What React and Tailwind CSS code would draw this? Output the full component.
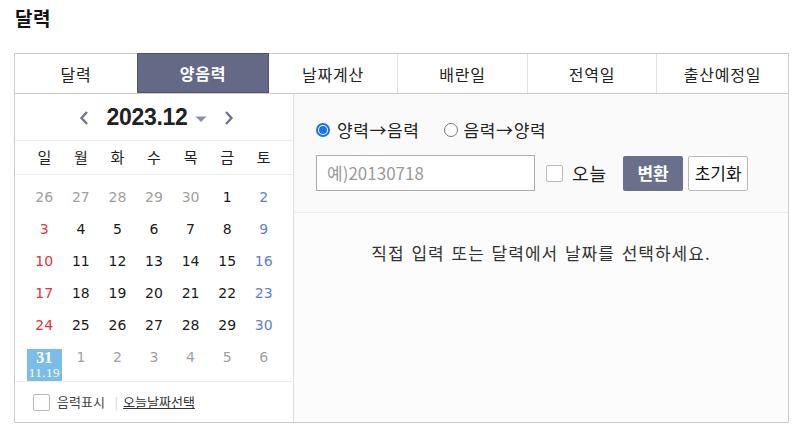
import React from "react";

const KR = { fontFamily: '"Noto Sans CJK KR", sans-serif' };
const NUM = { fontFamily: 'Tahoma, "DejaVu Sans", "Liberation Sans", sans-serif' };

const tabs = [
  { label: "달력", w: "w-[122px]" },
  { label: "양음력", w: "w-[132px]", active: true },
  { label: "날짜계산", w: "w-[129px]" },
  { label: "배란일", w: "w-[130px]" },
  { label: "전역일", w: "w-[129px]" },
  { label: "출산예정일", w: "w-[131px]" },
];

const weeks = [
  [[26, "o"], [27, "o"], [28, "o"], [29, "o"], [30, "o"], [1, "n"], [2, "sat"]],
  [[3, "sun"], [4, "n"], [5, "n"], [6, "n"], [7, "n"], [8, "n"], [9, "sat"]],
  [[10, "sun"], [11, "n"], [12, "n"], [13, "n"], [14, "n"], [15, "n"], [16, "sat"]],
  [[17, "sun"], [18, "n"], [19, "n"], [20, "n"], [21, "n"], [22, "n"], [23, "sat"]],
  [[24, "sun"], [25, "n"], [26, "n"], [27, "n"], [28, "n"], [29, "n"], [30, "sat"]],
  [[31, "today"], [1, "o"], [2, "o"], [3, "o"], [4, "o"], [5, "o"], [6, "o"]],
];

const colorFor = (t) =>
  t === "o"
    ? "text-[#a0a0a0]"
    : t === "sun"
    ? "text-[#e2323c]"
    : t === "sat"
    ? "text-[#5b7fd6]"
    : "text-[#1a1a1a]";

function Chevron({ dir }) {
  return (
    <svg width="10" height="16" viewBox="0 0 10 16" className="block">
      {dir === "left" ? (
        <path d="M8 2 L2.5 8 L8 14" fill="none" stroke="#6f7790" strokeWidth="2.4" />
      ) : (
        <path d="M2 2 L7.5 8 L2 14" fill="none" stroke="#6f7790" strokeWidth="2.4" />
      )}
    </svg>
  );
}

export default function App() {
  return (
    <div className="w-[795px] h-[428px] bg-white text-[#222] overflow-hidden" style={KR}>
      <div className="h-[53px] pl-[15px] pt-[5px] text-[19px] font-bold leading-[26px] text-[#111] tracking-[0.5px]">
        달력
      </div>
      <div className="ml-[14px] w-[775px] border border-[#cccccc]">
        {/* tabs */}
        <div className="flex h-[40px] border-b border-[#cccccc]">
          {tabs.map((t, i) => (
            <div
              key={i}
              className={
                t.w +
                " flex items-center justify-center text-[16px] tracking-[0.8px] " +
                (t.active
                  ? "bg-[#646a86] text-white font-bold border border-[#4e546e] -mt-px h-[40px]"
                  : "text-[#222] " + (i < tabs.length - 1 && !tabs[i + 1].active ? "border-r border-[#e2e2e2]" : ""))
              }
            >
              {t.label}
            </div>
          ))}
        </div>
        {/* body */}
        <div className="flex h-[328px]">
          {/* left calendar */}
          <div className="w-[279px] border-r border-[#dddddd] bg-white flex flex-col">
            <div className="h-[47px] border-b border-[#eeeeee] flex items-center justify-center">
              <div className="flex items-center mt-[1px] ml-[5px]">
                <Chevron dir="left" />
                <span
                  className="ml-[17px] text-[23px] font-bold text-[#222] tracking-[-0.3px]"
                  style={{ fontFamily: '"Liberation Sans", Arial, sans-serif' }}
                >
                  2023.12
                </span>
                <svg width="12" height="8" viewBox="0 0 12 8" className="ml-[7px] mt-[2px]">
                  <path d="M0.5 1.5 L11.5 1.5 L6 7 Z" fill="#8a90a6" />
                </svg>
                <span className="ml-[17px]">
                  <Chevron dir="right" />
                </span>
              </div>
            </div>
            <div className="h-[34px] border-b border-[#eeeeee] grid grid-cols-7 px-[11px] items-center text-[15px] text-[#222]">
              {["일", "월", "화", "수", "목", "금", "토"].map((d) => (
                <div key={d} className="text-center">
                  {d}
                </div>
              ))}
            </div>
            <div className="pt-[14px] px-[11px] h-[207px] border-b border-[#eeeeee]">
              {weeks.map((w, wi) => (
                <div key={wi} className="grid grid-cols-7 h-[32px]">
                  {w.map(([n, t], di) =>
                    t === "today" ? (
                      <div key={di} className="flex justify-center">
                        <div
                          className="w-[35px] h-[32px] bg-[#7cbce8] text-white flex flex-col items-center"
                          style={{ fontFamily: '"Liberation Serif", serif' }}
                        >
                          <span className="text-[16px] font-bold leading-[16px] mt-[1px]">31</span>
                          <span className="text-[13px] leading-[14px] tracking-[0.5px]">11.19</span>
                        </div>
                      </div>
                    ) : (
                      <div
                        key={di}
                        className={"text-center text-[14px] leading-[16px] " + colorFor(t)}
                        style={NUM}
                      >
                        {n}
                      </div>
                    )
                  )}
                </div>
              ))}
            </div>
            <div className="flex-1 flex items-center pl-[18px] text-[13px] text-[#444]">
              <span className="w-[17px] h-[17px] border border-[#bbbbbb] rounded-[2px] bg-white" />
              <span className="ml-[7px]">음력표시</span>
              <span className="ml-[10px] text-[#d5d5d5] text-[12px]">|</span>
              <span className="ml-[5px] underline text-[#333]">오늘날짜선택</span>
            </div>
          </div>
          {/* right */}
          <div className="flex-1 flex flex-col bg-[#fcfcfc]">
            <div className="h-[119px] bg-[#fafafa] border-b border-[#ececec] pl-[22px] pt-[26px]">
              <div className="flex items-center h-[20px] text-[17px] tracking-[0.6px] text-[#222]">
                <span className="w-[14px] h-[14px] rounded-full border-[2px] border-[#1a73e8] flex items-center justify-center bg-white">
                  <span className="w-[8px] h-[8px] rounded-full bg-[#1a73e8]" />
                </span>
                <span className="ml-[7px]">양력→음력</span>
                <span className="ml-[24px] w-[14px] h-[14px] rounded-full border border-[#777777] bg-white" />
                <span className="ml-[6px]">음력→양력</span>
              </div>
              <div className="flex items-center mt-[15px] h-[36px]">
                <div className="w-[219px] h-[36px] border border-[#aaaaaa] bg-white flex items-center pl-[10px] text-[17px] text-[#9a9a9a]">
                  예)20130718
                </div>
                <span className="ml-[11px] w-[17px] h-[17px] border border-[#bbbbbb] rounded-[2px] bg-white" />
                <span className="ml-[9px] text-[18px] tracking-[1px] text-[#222]">오늘</span>
                <div className="ml-[16px] w-[60px] h-[35px] rounded-[2px] bg-[#6b708a] text-white font-bold text-[17px] flex items-center justify-center">
                  변환
                </div>
                <div className="ml-[5px] w-[60px] h-[35px] rounded-[2px] border border-[#bbbbbb] bg-white text-[#111] text-[17px] flex items-center justify-center">
                  초기화
                </div>
              </div>
            </div>
            <div className="pt-[30px] text-center text-[17px] leading-[20px] text-[#333] tracking-[1px] [word-spacing:2px]">
              직접 입력 또는 달력에서 날짜를 선택하세요.
            </div>
          </div>
        </div>
      </div>
    </div>
  );
}
